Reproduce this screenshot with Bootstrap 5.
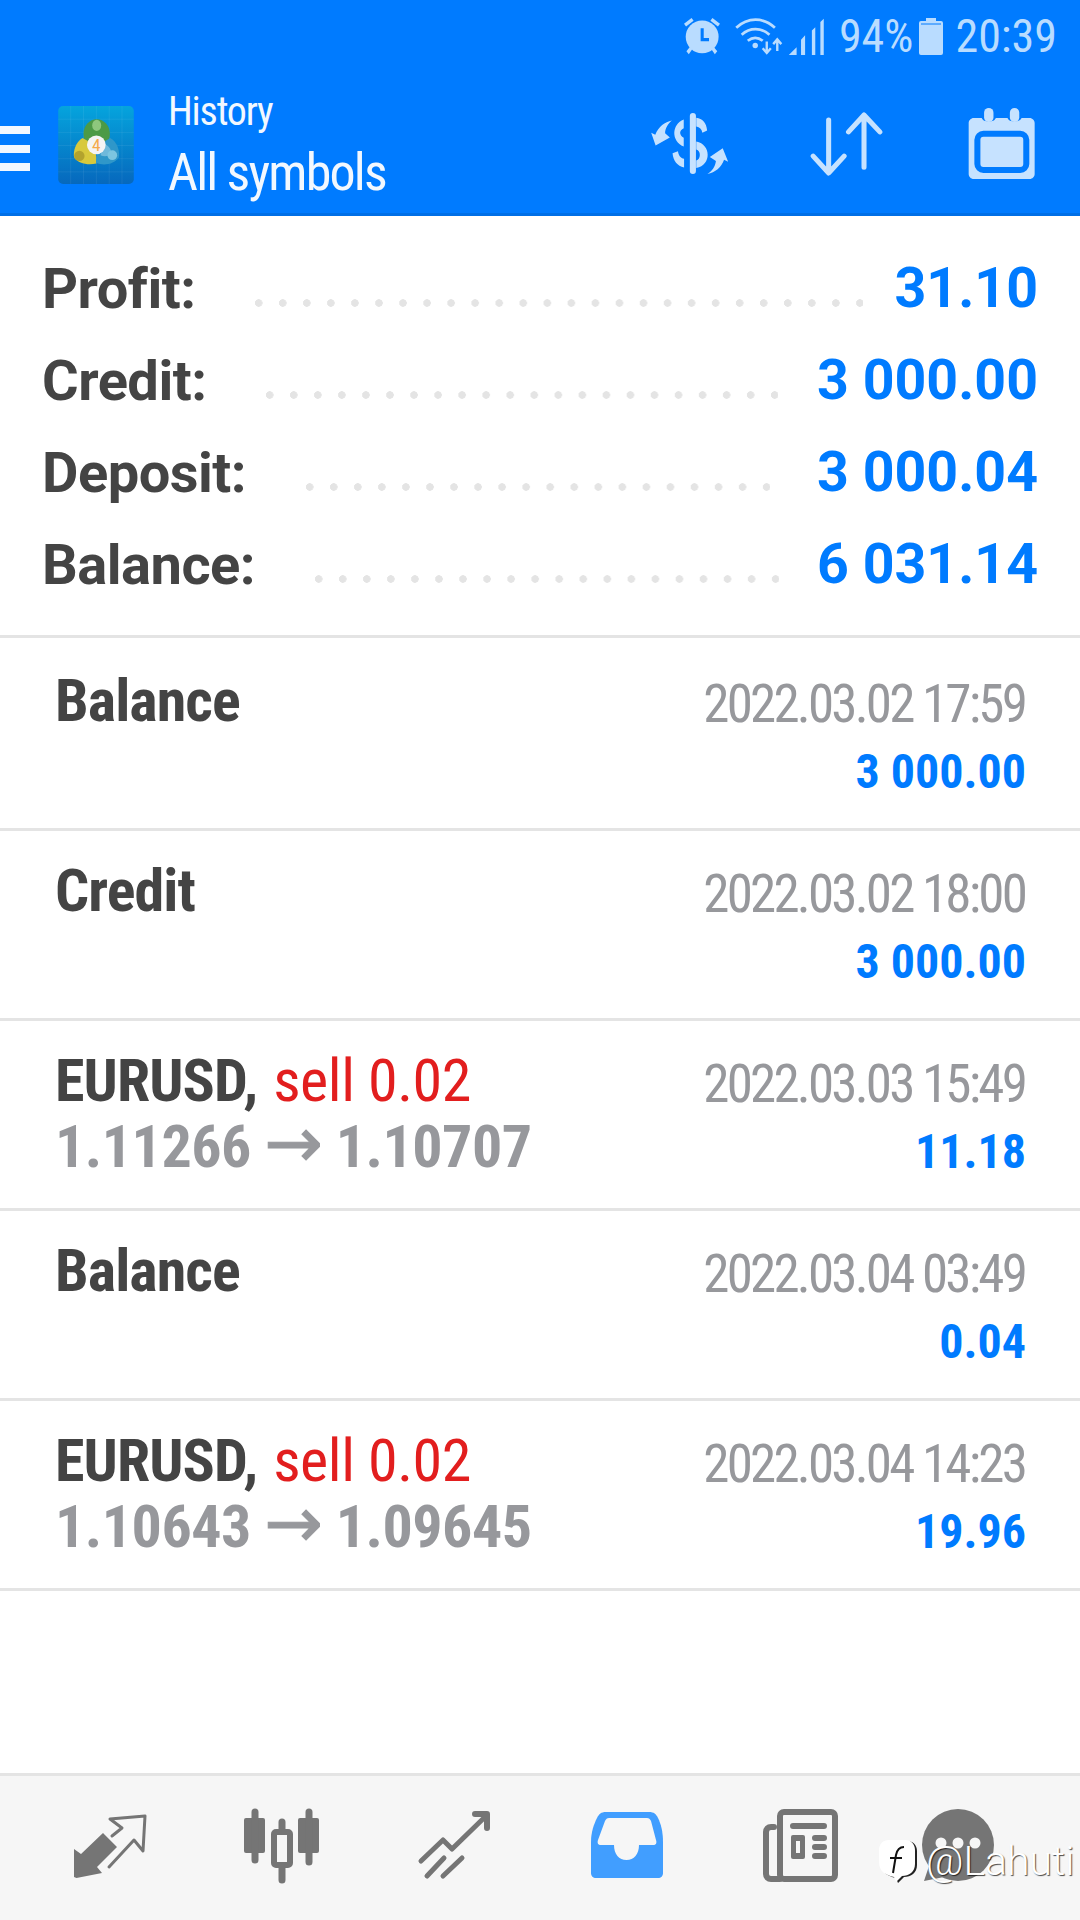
<!doctype html>
<html lang="en">
<head>
<meta charset="utf-8">
<meta name="viewport" content="width=device-width, initial-scale=1">
<title>History</title>
<link href="https://cdn.jsdelivr.net/npm/bootstrap@5.3.3/dist/css/bootstrap.min.css" rel="stylesheet">
<style>
body { width: 1080px; height: 1920px; overflow: hidden; background: #fff; font-family: Roboto, sans-serif; font-stretch: 75%; color: #444; }
.screen { height: 1920px; }

.appbar { height: 216px; background: #007bff; border-bottom: 3px solid #006fe6; }
.statusbar { height: 72px; padding-right: 23px; color: #b9dcff; font-size: 46px; line-height: 72px; }
.st-alarm { margin-right: 14px; }
.st-net { margin-right: 12px; }
.st-batt { margin-left: 6px; }
.st-time { margin-left: 12px; }
.toolbar { height: 141px; padding-top: 5px; padding-right: 43px; }
.burger { margin-top: 6px; }
.mt-logo { margin-left: 28px; }
.titles { margin-left: 34px; margin-top: -4px; color: #f2f8ff; }
.title-sm { font-size: 40px; line-height: 60px; letter-spacing: -1.2px; }
.title-lg { font-size: 52px; line-height: 62px; letter-spacing: -1.8px; }
.tool-first { margin-top: -4px; }
.tool-mid { margin-left: 81px; margin-top: -2px; }
.tool-last { margin-left: 83px; margin-top: -4px; }

.summary { padding: 27px 42px 24px 42px; border-bottom: 3px solid #e4e4e4; margin-bottom: 3px; }
.sum-line { height: 92px; line-height: 92px; font-size: 56px; font-weight: 700; font-stretch: 100%; }
.sum-label { letter-spacing: -.5px; }
.leader { height: 8px; margin: 28px 0 0 60px; background: radial-gradient(circle at 3.7px 4px, #e4e4e4 3.5px, transparent 4px) repeat-x left top / 24.05px 8px; }
.sum-value { color: #007bff; font-size: 55.5px; }

.deal { height: 190px; padding: 27px 54px 0 55px; border-bottom: 3px solid #e4e4e4; }
.deal-name { font-size: 60px; line-height: 66px; font-weight: 700; letter-spacing: -.9px; }
.deal-sell { color: #e21e1e; font-weight: 400; letter-spacing: -.4px; margin-left: 3px; }
.deal-prices { font-size: 60px; line-height: 66px; font-weight: 700; letter-spacing: -.5px; color: #97989c; }
.deal-arrow { font-family: "DejaVu Sans", sans-serif; font-stretch: 100%; font-size: 70px; line-height: 0; font-weight: 400; -webkit-text-stroke: 1px #97989c; }
.deal-side { padding-top: 3px; text-align: right; }
.deal-time { font-size: 53px; line-height: 66px; letter-spacing: -2.8px; margin-right: 1px; color: #97989c; }
.deal-sum { font-size: 48px; line-height: 66px; margin-top: 2px; font-weight: 700; color: #007bff; }

.tabbar { height: 147px; background: #f6f6f6; border-top: 3px solid #e4e4e4; }
.tab-fill { fill: #757575; }
.tab-line { fill: none; stroke: #757575; stroke-linecap: round; stroke-linejoin: round; }

.stamp { position: absolute; left: 878px; top: 1838px; color: #fff; font-family: Roboto, sans-serif; font-stretch: 100%; font-weight: 300; font-size: 41px; line-height: 46px; text-shadow: 1px 1px 1px rgba(0,0,0,.7); }
</style>
</head>
<body>
<div class="screen position-relative d-flex flex-column">

  <header class="appbar">
    <div class="statusbar d-flex justify-content-end align-items-center">
      <svg class="st-alarm" width="36" height="37" viewBox="425 55 105 108"><g fill="#b9dcff"><circle cx="478" cy="110" r="48"/><path d="M425 72l22-17 6 8-22 17zM530 72l-22-17-6 8 22 17zM432 152l10-12 7 6-10 15zM522 152l-10-12-7 6 10 15z"/></g><path d="M478 85v33h20" fill="none" stroke="#007bff" stroke-width="9"/></svg>
      <svg class="st-net" width="93" height="38" viewBox="570 50 265 112"><g fill="none" stroke="#b9dcff" stroke-width="8"><path d="M572 82c34-32 80-32 114 0"/><path d="M588 102c24-22 58-22 82 0"/><path d="M606 120c14-11 30-11 44 0"/></g><circle cx="628" cy="134" r="8" fill="#b9dcff"/><path d="M662 122v28M650 142l12 14 12-14M693 150v-28M681 130l12-14 12 14" fill="none" stroke="#b9dcff" stroke-width="7"/><path d="M727 162l23-23v23zM763 162v-45l12-13v58zM795 162v-72l10-10v82zM820 162v-97l10-10v107z" fill="#b9dcff"/></svg>
      <span>94%</span>
      <svg class="st-batt" width="24" height="37" viewBox="0 0 24 37"><path d="M7 0h10v3h5a2 2 0 012 2v30a2 2 0 01-2 2H2a2 2 0 01-2-2V5a2 2 0 012-2h5z" fill="#b9dcff"/><path d="M2 6h20" stroke="#007bff" stroke-width="1"/></svg>
      <span class="st-time">20:39</span>
    </div>
    <div class="toolbar d-flex align-items-center">
      <svg class="burger" width="30" height="45" viewBox="0 0 30 45"><path d="M0 0h30v8H0zM0 19h30v8H0zM0 37h30v8H0z" fill="#f2f8ff"/></svg>
      <svg class="mt-logo" width="76" height="78" viewBox="170 320 218 225">
        <defs><linearGradient id="mtbg" x1="0" y1="0" x2="0" y2="1"><stop offset="0" stop-color="#05a4dd"/><stop offset="1" stop-color="#0668bd"/></linearGradient></defs>
        <rect x="170" y="320" width="218" height="225" rx="14" fill="url(#mtbg)"/>
        <path d="M206 320v225M243 320v225M280 320v225M317 320v225M354 320v225M170 358h218M170 396h218M170 434h218M170 472h218M170 510h218" stroke="#fff" stroke-opacity=".1" stroke-width="2"/>
        <ellipse cx="281" cy="400" rx="38" ry="42" fill="#4c9a46"/><ellipse cx="281" cy="376" rx="13" ry="16" fill="#8ec77d"/>
        <path d="M240 412c-20 12-28 40-24 56 10 18 40 24 64 18 4-20-6-60-40-74z" fill="#d8c93c"/><circle cx="231" cy="464" r="15" fill="#b3a32e"/>
        <path d="M320 412c22 12 28 40 25 56-12 20-44 26-66 16-2-20 10-58 41-72z" fill="#2f97c9"/><path d="M300 428c16 6 24 16 22 30-8 8-20 8-30 4z" fill="#bfe2f2" fill-opacity=".45"/><circle cx="326" cy="462" r="14" fill="#7cc5e0"/>
        <circle cx="280" cy="432" r="27" fill="#f4f4f4"/>
        <text x="280" y="450" text-anchor="middle" font-family="Roboto, sans-serif" font-size="50" fill="#f4a94a">4</text>
      </svg>
      <div class="titles">
        <div class="title-sm">History</div>
        <div class="title-lg">All symbols</div>
      </div>
      <svg class="ms-auto tool-first" width="79" height="61" viewBox="320 336 230 180"><g fill="#c6e2ff"><rect x="436" y="336" width="18" height="180" rx="9"/><path d="M418 355c-36 14-38 64 0 80v-26c-14-8-14-22 0-28zM455 350c18 2 30 14 32 38l-14 6c-2-10-8-16-18-18zM455 420c44 8 46 70 0 78v-22c14-2 14-30 0-32zM385 455l16-6c2 14 8 20 18 22v26c-20-4-32-20-34-42z"/><path d="M383 358c-12 10-20 24-20 38l14 12-42 24-13-38 12 6c10-24 28-38 49-42zM488 516c14-8 23-22 25-38l-18-12 38-26 16 40-12-6c-8 22-26 38-49 42z"/></g></svg>
      <svg class="tool-mid" width="73" height="64" viewBox="782 336 214 190"><path d="M836 360v155M790 467l46 50 46-50M941 500V345M895 395l46-50 47 50" fill="none" stroke="#c6e2ff" stroke-width="15" stroke-linecap="round" stroke-linejoin="round"/></svg>
      <svg class="tool-last" width="71" height="71" viewBox="1240 322 202 212">
        <path d="M1258 352h24c4 14 38 14 42 0h35c4 14 38 14 42 0h24c8 0 15 7 15 15v152c0 8-7 15-15 15h-167c-8 0-15-7-15-15V367c0-8 7-15 15-15z" fill="#c6e2ff"/>
        <rect x="1289" y="322" width="28" height="42" rx="14" fill="#c6e2ff"/><rect x="1366" y="322" width="28" height="42" rx="14" fill="#c6e2ff"/>
        <rect x="1269" y="399" width="146" height="108" rx="18" fill="#c6e2ff" stroke="#007bff" stroke-width="18"/>
      </svg>
    </div>
  </header>

  <section class="summary">
    <div class="sum-line d-flex"><span class="sum-label">Profit:</span><div class="leader align-self-center" style="width: 608px"></div><span class="sum-value ms-auto">31.10</span></div>
    <div class="sum-line d-flex"><span class="sum-label">Credit:</span><div class="leader align-self-center" style="width: 512px"></div><span class="sum-value ms-auto">3 000.00</span></div>
    <div class="sum-line d-flex"><span class="sum-label">Deposit:</span><div class="leader align-self-center" style="width: 464px"></div><span class="sum-value ms-auto">3 000.04</span></div>
    <div class="sum-line d-flex"><span class="sum-label">Balance:</span><div class="leader align-self-center" style="width: 464px"></div><span class="sum-value ms-auto">6 031.14</span></div>
  </section>

  <section class="flex-grow-1">
    <div class="deal d-flex justify-content-between">
      <div><div class="deal-name">Balance</div></div>
      <div class="deal-side"><div class="deal-time">2022.03.02 17:59</div><div class="deal-sum">3 000.00</div></div>
    </div>
    <div class="deal d-flex justify-content-between">
      <div><div class="deal-name">Credit</div></div>
      <div class="deal-side"><div class="deal-time">2022.03.02 18:00</div><div class="deal-sum">3 000.00</div></div>
    </div>
    <div class="deal d-flex justify-content-between">
      <div><div class="deal-name">EURUSD, <span class="deal-sell">sell 0.02</span></div><div class="deal-prices">1.11266 <span class="deal-arrow">→</span> 1.10707</div></div>
      <div class="deal-side"><div class="deal-time">2022.03.03 15:49</div><div class="deal-sum">11.18</div></div>
    </div>
    <div class="deal d-flex justify-content-between">
      <div><div class="deal-name">Balance</div></div>
      <div class="deal-side"><div class="deal-time">2022.03.04 03:49</div><div class="deal-sum">0.04</div></div>
    </div>
    <div class="deal d-flex justify-content-between">
      <div><div class="deal-name">EURUSD, <span class="deal-sell">sell 0.02</span></div><div class="deal-prices">1.10643 <span class="deal-arrow">→</span> 1.09645</div></div>
      <div class="deal-side"><div class="deal-time">2022.03.04 14:23</div><div class="deal-sum">19.96</div></div>
    </div>
  </section>

  <nav class="tabbar row g-0">
    <div class="col-2"><svg class="d-block" width="180" height="144" viewBox="0 1776 180 144">
      <path class="tab-fill" d="M74 1849l7 5 22-21 14 14-20 20 5 6-25.500 5-2.500-1z"/>
      <path class="tab-line" stroke-width="3" d="M112 1836l10-8-12-9 35-3-2 35-9-11-25 27"/>
    </svg></div>
    <div class="col-2"><svg class="d-block" width="180" height="144" viewBox="180 1776 180 144">
      <rect class="tab-fill" x="244" y="1818" width="21" height="35" rx="2"/><rect class="tab-fill" x="298" y="1818" width="21" height="35" rx="2"/>
      <path class="tab-line" stroke-width="7" d="M255 1812v48M309 1812v50M282 1822v8M282 1868v12"/>
      <rect x="274" y="1832" width="16" height="33" rx="2" fill="none" stroke="#757575" stroke-width="6"/>
    </svg></div>
    <div class="col-2"><svg class="d-block" width="180" height="144" viewBox="360 1776 180 144">
      <path class="tab-line" stroke-width="5" d="M421 1861l22-21 9 9 35-34"/>
      <path class="tab-line" stroke-width="6" d="M475 1814h12v14"/>
      <path class="tab-line" stroke-width="5" d="M427 1876l17-18M443 1876l19-18"/>
    </svg></div>
    <div class="col-2"><svg class="d-block" width="180" height="144" viewBox="540 1776 180 144">
      <path fill="#419eff" d="M606 1812h43c5 0 7 2 9 6 3 6 5 14 5 24v31c0 3-2 5-5 5h-62c-3 0-5-2-5-5v-31c0-10 3-18 6-24 2-4 4-6 9-6z"/>
      <path fill="#f6f6f6" d="M609 1818h38c2 0 3 1 4 3l5 19c1 3 0 5-3 5h-14c0 9-5 15-12.500 15s-12.500-6-12.500-15h-13c-3 0-4-2-3-5l7-19c1-2 2-3 4-3z"/>
    </svg></div>
    <div class="col-2"><svg class="d-block" width="180" height="144" viewBox="720 1776 180 144">
      <rect x="780" y="1812" width="55" height="67" rx="4" fill="none" stroke="#757575" stroke-width="6"/>
      <path class="tab-line" stroke-width="6" d="M774 1827h-3c-3 0-5 2-5 5v42c0 3 2 5 5 5h9"/>
      <path class="tab-line" stroke-width="6" d="M793 1826h31M815 1838h9M815 1847h9M815 1856h9"/>
      <rect class="tab-fill" x="791" y="1835" width="14" height="24" rx="2"/><rect x="796" y="1841" width="4" height="12" fill="#f6f6f6"/>
    </svg></div>
    <div class="col-2"><svg class="d-block" width="180" height="144" viewBox="900 1776 180 144">
      <circle class="tab-fill" cx="958" cy="1845" r="36"/><path class="tab-fill" d="M924 1881l6-18 14 14z"/>
      <circle cx="941" cy="1843" r="5.500" fill="#f6f6f6"/><circle cx="958" cy="1843" r="5.500" fill="#f6f6f6"/><circle cx="975" cy="1843" r="5.500" fill="#f6f6f6"/>
    </svg></div>
  </nav>

  <div class="stamp d-flex align-items-center gap-2">
    <svg width="40" height="46" viewBox="0 0 40 46"><path d="M13 3h16c6 0 10 4 10 10v14c0 8-6 12-13 12l-6 6-2-5C9 38 3 34 3 25V13C3 7 7 3 13 3z" fill="#222"/><path d="M11 2h16c6 0 10 4 10 10v14c0 8-6 12-13 12l-6 6-2-5C7 37 1 33 1 24V12C1 6 5 2 11 2z" fill="#fff"/><path d="M26 9c-5 0-7 3-8 8l-3 18M12 20h12" fill="none" stroke="#111" stroke-width="2"/></svg>
    <span>@Lahuti</span>
  </div>
</div>
<script src="https://cdn.jsdelivr.net/npm/bootstrap@5.3.3/dist/js/bootstrap.bundle.min.js"></script>
</body>
</html>
